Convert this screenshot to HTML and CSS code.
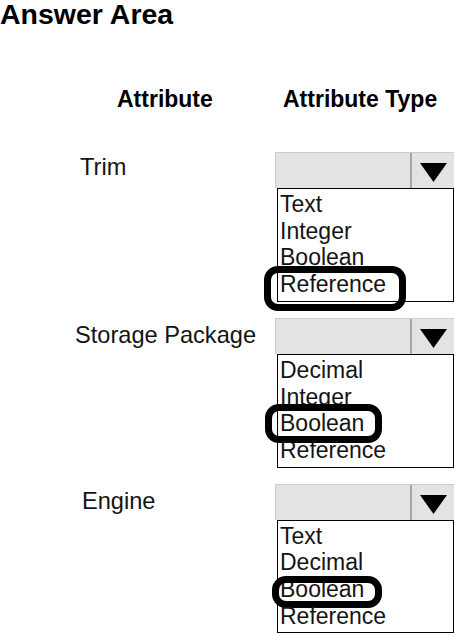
FILE: index.html
```html
<!DOCTYPE html>
<html lang="en">
<head>
<meta charset="utf-8">
<title>Answer Area</title>
<link rel="stylesheet" href="styles.css">
</head>
<body>
<main class="answer">
  <h1 class="title">Answer Area</h1>
  <div class="grid col-heads">
    <div class="col-attr">Attribute</div>
    <div class="col-type">Attribute Type</div>
  </div>
  <div class="rows">
    <div class="grid row">
      <div class="label label-trim">Trim</div>
      <div class="select">
        <div class="select-head">
          <div class="select-value"></div>
          <div class="select-arrow"><svg width="27" height="19" viewBox="0 0 27 19"><polygon points="0,0 27,0 13.5,19" fill="#000"/></svg></div>
        </div>
        <ul class="options">
          <li>Text</li>
          <li>Integer</li>
          <li>Boolean</li>
          <li class="picked mark-a">Reference</li>
        </ul>
      </div>
    </div>
    <div class="grid row">
      <div class="label label-storage">Storage Package</div>
      <div class="select">
        <div class="select-head">
          <div class="select-value"></div>
          <div class="select-arrow"><svg width="27" height="19" viewBox="0 0 27 19"><polygon points="0,0 27,0 13.5,19" fill="#000"/></svg></div>
        </div>
        <ul class="options">
          <li>Decimal</li>
          <li>Integer</li>
          <li class="picked mark-b">Boolean</li>
          <li>Reference</li>
        </ul>
      </div>
    </div>
    <div class="grid row">
      <div class="label label-engine">Engine</div>
      <div class="select">
        <div class="select-head">
          <div class="select-value"></div>
          <div class="select-arrow"><svg width="27" height="19" viewBox="0 0 27 19"><polygon points="0,0 27,0 13.5,19" fill="#000"/></svg></div>
        </div>
        <ul class="options">
          <li>Text</li>
          <li>Decimal</li>
          <li class="picked mark-c">Boolean</li>
          <li>Reference</li>
        </ul>
      </div>
    </div>
  </div>
</main>
</body>
</html>
```
FILE: styles.css
```css
html, body {
  margin: 0;
  padding: 0;
  background: #fff;
}
body {
  font-family: "Liberation Sans", Arial, sans-serif;
  color: #141414;
  width: 455px;
  height: 636px;
  overflow: hidden;
}
.answer {
  display: flex;
  flex-direction: column;
}
.title {
  margin: 0;
  font-size: 28.5px;
  font-weight: bold;
  line-height: 28px;
  color: #000;
}
.grid {
  display: grid;
  grid-template-columns: 277px 177px;
}
.col-heads {
  margin-top: 58px;
  font-size: 23px;
  font-weight: bold;
  line-height: 26px;
  color: #000;
}
.col-attr {
  padding-left: 117px;
}
.col-type {
  padding-left: 6px;
  white-space: nowrap;
}
.rows {
  margin-top: 40px;
  display: flex;
  flex-direction: column;
  gap: 16px;
}
.label {
  font-size: 23.6px;
  line-height: 26px;
  padding-top: 2px;
  white-space: nowrap;
}
.label-trim { padding-left: 80px; }
.label-storage { padding-left: 75px; padding-top: 4px; }
.label-engine { padding-left: 82px; padding-top: 4px; }
.select {
  display: flex;
  flex-direction: column;
}
.select-head {
  display: flex;
  height: 35px;
  background: #e3e3e3;
  border-top: 1px solid #cdcdcd;
  border-left: 1px solid #d0d0d0;
  margin-left: -2px;
}
.select-value {
  flex: 1;
  border-right: 2px solid #a6a6a6;
}
.select-arrow {
  width: 42px;
  display: flex;
  justify-content: center;
  align-items: center;
  padding-top: 4px;
}
.select-arrow svg {
  display: block;
}
.options {
  list-style: none;
  margin: 0;
  padding: 2px 0 3px 0;
  border: 1px solid #000;
  font-size: 23px;
  line-height: 26.7px;
  color: #141414;
}
.options li {
  padding-left: 2px;
  position: relative;
  white-space: nowrap;
}
.picked::after {
  content: "";
  position: absolute;
  border: 7px solid #000;
  border-radius: 14px;
  box-sizing: border-box;
}
.mark-a::after {
  left: -14px;
  top: -5px;
  width: 142px;
  height: 45px;
}
.mark-b::after {
  left: -13px;
  top: -6px;
  width: 117px;
  height: 39px;
}
.mark-c::after {
  left: -6px;
  top: 0px;
  width: 110px;
  height: 32px;
}
```
